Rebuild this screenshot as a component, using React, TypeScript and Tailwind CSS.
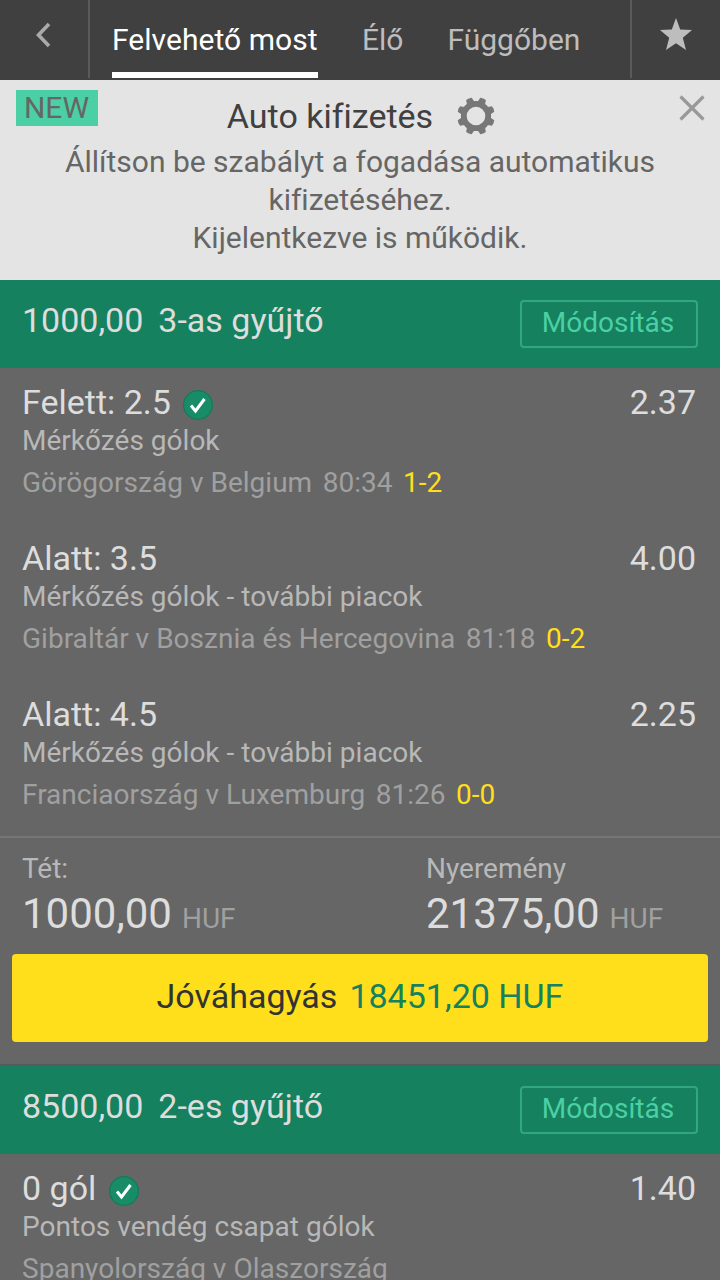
import React from 'react';

function Check() {
  return (
    <svg className="ml-[11.500px] mt-[7px] size-8 shrink-0" viewBox="0 0 32 32">
      <circle cx="16" cy="16" r="14.4" fill="#178c66" stroke="#147a59" strokeWidth="1.2" />
      <path d="M9 16.500l4.500 5.500L22.500 10" fill="none" stroke="#fff" strokeWidth="3" />
    </svg>
  );
}

function BetHeader({ stake, name }: { stake: string; name: string }) {
  return (
    <div className="flex h-[88px] items-start justify-between bg-[#15815e] px-[22px] pt-5">
      <div className="flex gap-[15px] text-[34px] leading-[40px] text-[#ddd]">
        <span>{stake}</span>
        <span>{name}</span>
      </div>
      <button className="flex h-12 w-[178px] justify-center rounded-[4px] border-2 border-[#30a781] pr-0.5 text-[28px] leading-[40px] text-[#4bd0a5]">
        <span className="mt-px">Módosítás</span>
      </button>
    </div>
  );
}

type Leg = { pick: string; odds: string; market: string; match: string; time?: string; score?: string; won?: boolean };

function Selection({ pick, odds, market, match, time, score, won }: Leg) {
  return (
    <div className="h-[156px] pl-[22px] pr-6 pt-[14px]">
      <div className="flex h-[41px] items-start text-[34px] leading-[40px] text-[#ddd]">
        <span>{pick}</span>
        {won && <Check />}
        <span className="ml-auto">{odds}</span>
      </div>
      <div className="h-9 text-[28px] leading-[36px] tracking-[0.02px] text-[#b8b8b8]">{market}</div>
      <div className="mt-1.5 flex gap-[10.500px] whitespace-nowrap text-[28px] leading-[36px] tracking-[0.02px] text-[#a0a0a0]">
        <span>{match}</span>
        {time && <span>{time}</span>}
        {score && <span className="text-[#ffdf1b]">{score}</span>}
      </div>
    </div>
  );
}

function Amount({ label, value }: { label: string; value: string }) {
  return (
    <div className="w-[404px] shrink-0">
      <div className="h-[35px] text-[28px] leading-[34px] text-[#b8b8b8]">{label}</div>
      <div className="flex items-baseline gap-[10px] text-[42px] leading-[54px] text-[#ddd]">
        {value}<span className="text-[28px] text-[#a0a0a0]">HUF</span>
      </div>
    </div>
  );
}

export default function App() {
  return (
    <div className="h-[1280px] w-[720px] overflow-hidden bg-[#666] font-['Roboto',sans-serif] [font-variant-ligatures:none]">
      <header className="flex h-20 bg-[#404040] text-[30px] text-[#bdbdbd]">
        <div className="flex h-[78px] w-[90px] items-start justify-center border-r-2 border-[#5a5a5a] pr-[3px] pt-[21px]">
          <svg className="h-7 w-5" viewBox="0 0 20 28"><path d="M16 3L5.500 14L16 25" fill="none" stroke="#aaa" strokeWidth="3.600" /></svg>
        </div>
        <nav className="flex flex-1 gap-[44px] pl-[22px] leading-[80px]">
          <span className="h-[78px] w-[206px] whitespace-nowrap border-b-[6px] border-white tracking-[0.04px] text-white">Felvehető most</span>
          <span>Élő</span>
          <span>Függőben</span>
        </nav>
        <div className="flex h-[78px] w-[90px] justify-center border-l-2 border-[#5a5a5a] pt-[18px]">
          <svg className="size-8" viewBox="0 0 32 32"><path d="M16 0l4.200 11.500L32 12l-9.200 7.700L26 32l-10-6.800L6 32l3.200-12.300L0 12l11.800-.5z" fill="#bdbdbd" /></svg>
        </div>
      </header>
      <section className="relative h-[200px] bg-[#e4e4e4] text-center text-[#666]">
        <span className="absolute left-4 top-[10px] h-9 w-[82px] bg-[#4bd0a5] pr-px text-[30px] leading-9">NEW</span>
        <svg className="absolute right-[15px] top-[15px] size-[26px]" viewBox="0 0 26 26"><path d="M1.500 1.500l23 23M24.500 1.500L1.500 24.500" stroke="#999" strokeWidth="3.200" /></svg>
        <div className="flex h-[63px] items-center justify-center gap-6 pl-0.5 pt-[10px] text-[34px] text-[#404040]">
          <span>Auto kifizetés</span>
          <svg className="-mt-0.5 size-[38px]" viewBox="-19 -19 38 38">
            <circle r="12.200" fill="none" stroke="#777" strokeWidth="5.800" />
            {[22.5, 67.5, 112.5, 157.5, 202.5, 247.5, 292.5, 337.5].map((a) => (
              <path key={a} d="M-4.200-13L-3-18.500Q0-19.500 3-18.500L4.200-13z" fill="#777" transform={`rotate(${a})`} />
            ))}
          </svg>
        </div>
        <p className="text-[30px] leading-[38px]">Állítson be szabályt a fogadása automatikus<br />kifizetéséhez.<br />Kijelentkezve is működik.</p>
      </section>
      <BetHeader stake="1000,00" name="3-as gyűjtő" />
      <Selection won pick="Felett: 2.5" odds="2.37" market="Mérkőzés gólok" match="Görögország v Belgium" time="80:34" score="1-2" />
      <Selection pick="Alatt: 3.5" odds="4.00" market="Mérkőzés gólok - további piacok" match="Gibraltár v Bosznia és Hercegovina" time="81:18" score="0-2" />
      <Selection pick="Alatt: 4.5" odds="2.25" market="Mérkőzés gólok - további piacok" match="Franciaország v Luxemburg" time="81:26" score="0-0" />
      <div className="flex h-[118px] border-t-2 border-[#757575] pl-[22px] pt-[14px]">
        <Amount label="Tét:" value="1000,00" />
        <Amount label="Nyeremény" value="21375,00" />
      </div>
      <button className="mx-3 flex h-[88px] w-[696px] items-center justify-center gap-3 rounded-[4px] bg-[#ffdf1b] pb-1 text-[34px] text-[#333]">
        Jóváhagyás <span className="text-[#15815e]">18451,20 HUF</span>
      </button>
      <div className="h-6 border-b-2 border-[#5a5a5a]" />
      <BetHeader stake="8500,00" name="2-es gyűjtő" />
      <Selection won pick="0 gól" odds="1.40" market="Pontos vendég csapat gólok" match="Spanyolország v Olaszország" />
    </div>
  );
}
